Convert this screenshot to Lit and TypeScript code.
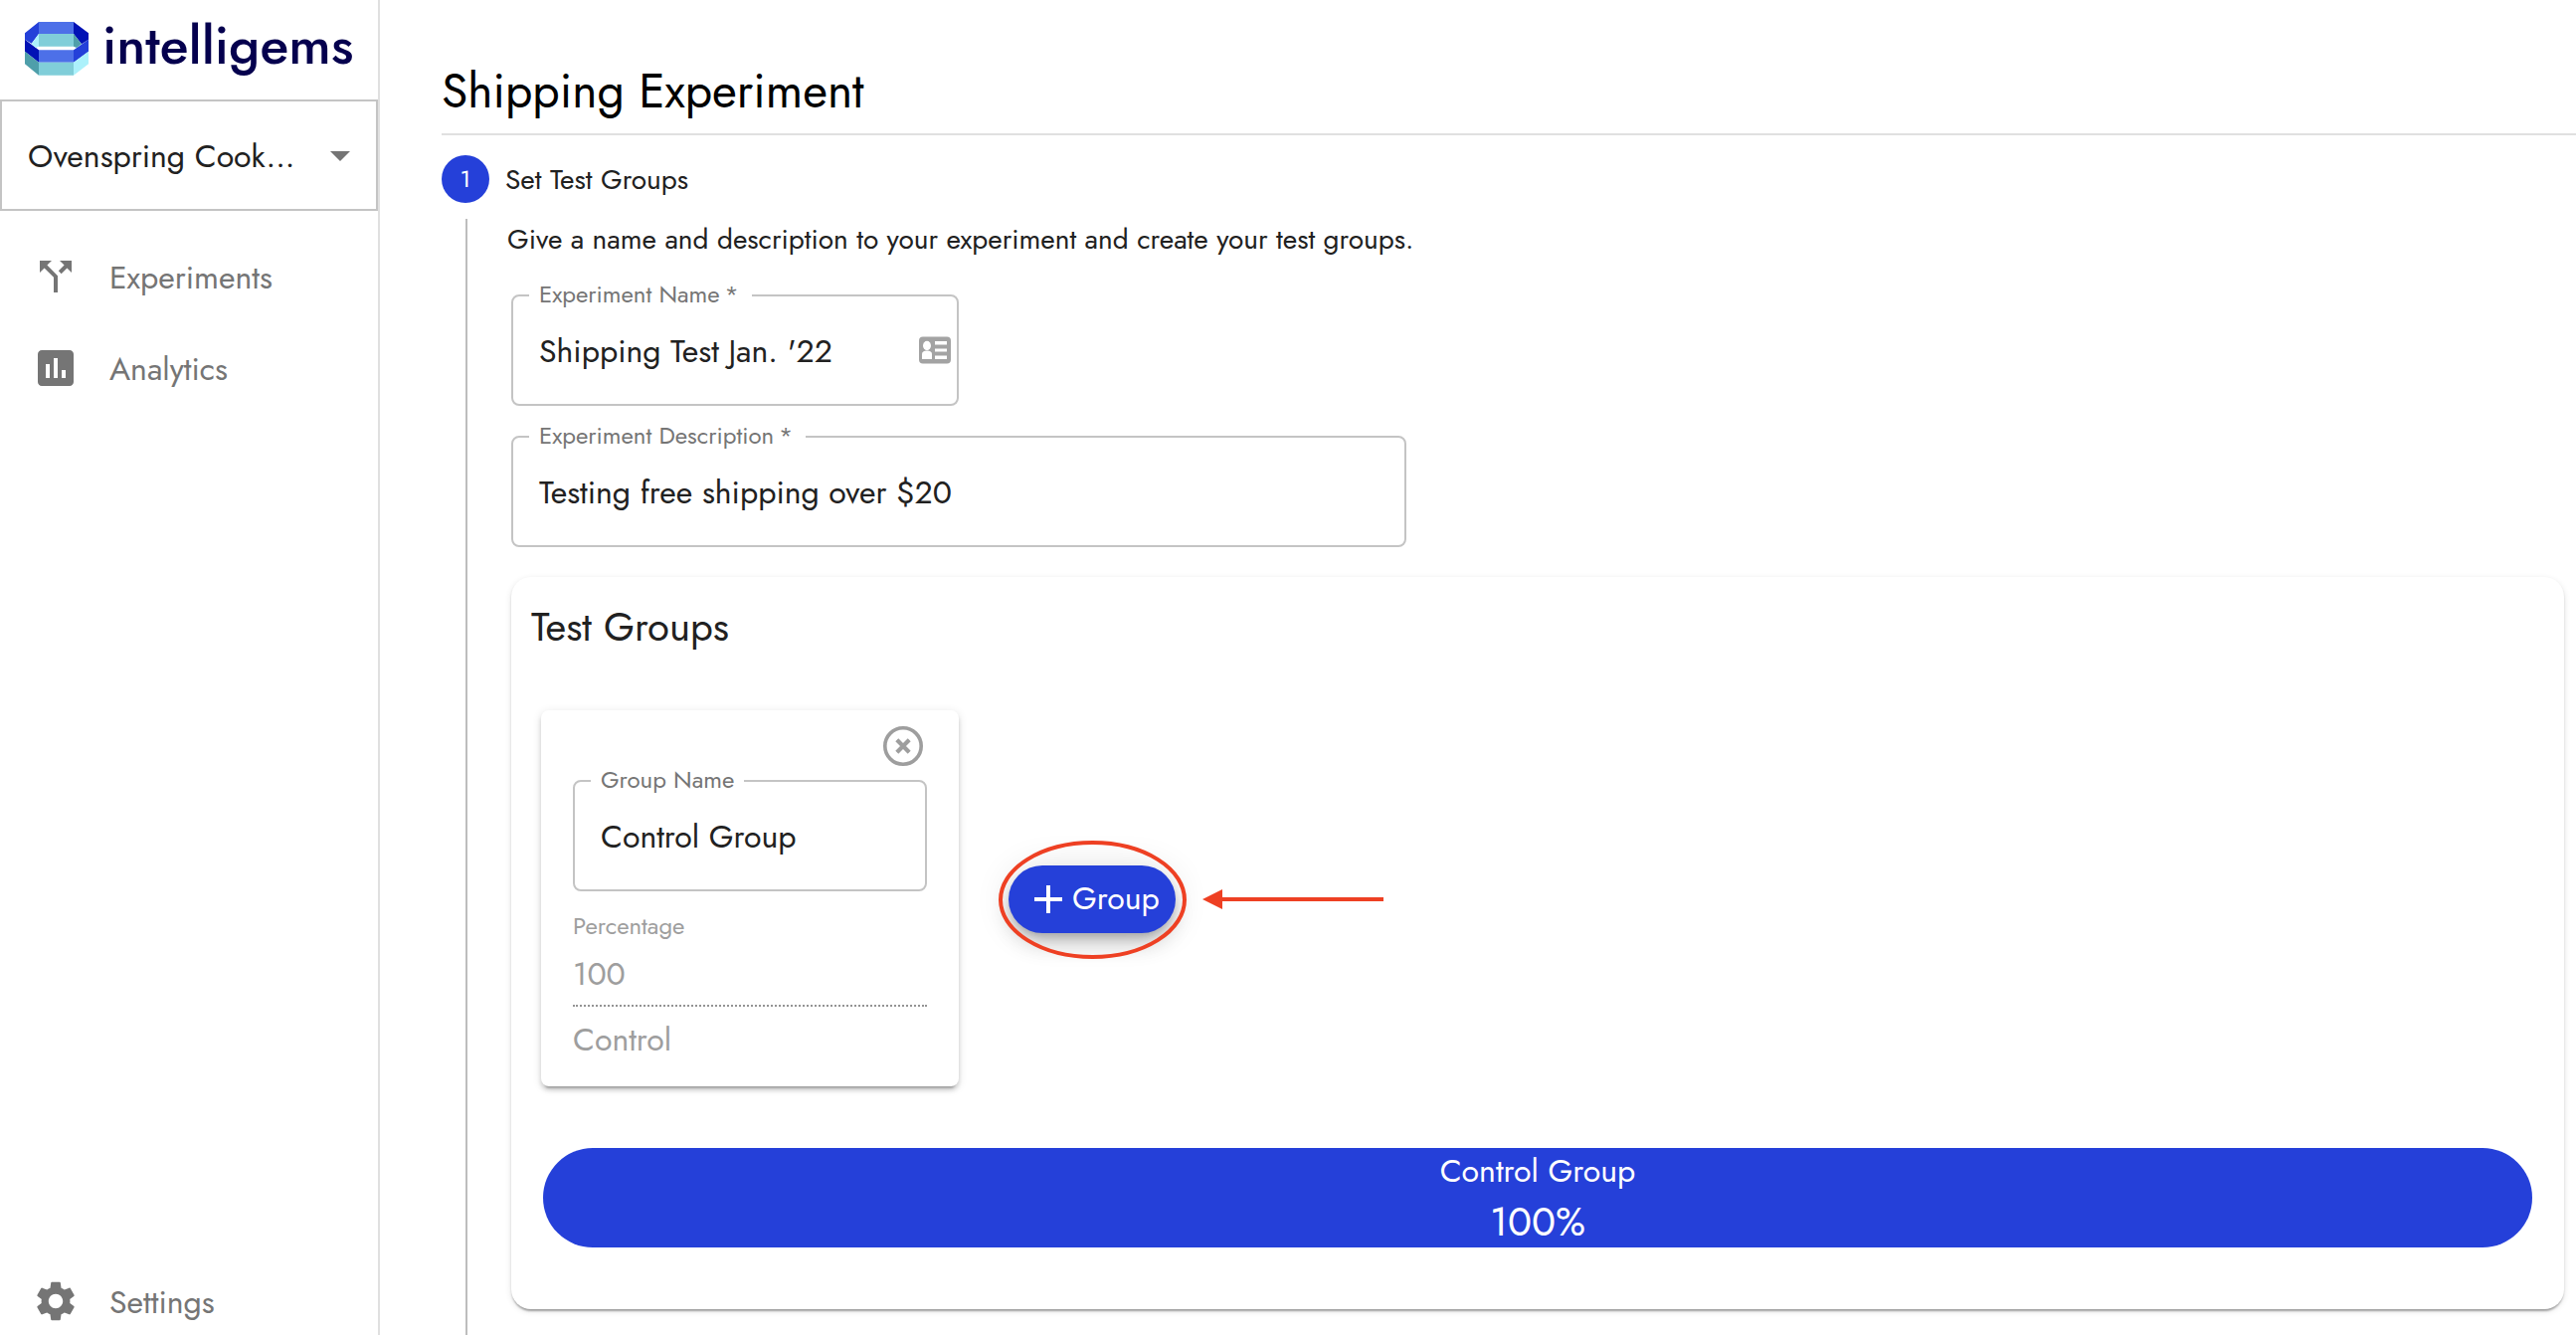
import { LitElement, html, css, svg, nothing } from "lit";
import { customElement, property } from "lit/decorators.js";

const sharedText = css`
  :host {
    font-family: Jost, Lato, "Open Sans", sans-serif;
    color: #212121;
  }
  * {
    box-sizing: border-box;
  }
`;

@customElement("outlined-field")
class OutlinedField extends LitElement {
  @property() label = "";
  @property() value = "";
  @property({ type: Boolean }) required = false;

  static styles = [
    sharedText,
    css`
      :host {
        display: block;
      }
      .frame {
        display: flex;
        align-items: center;
        justify-content: space-between;
        height: 123px;
        margin: -11px 0 0;
        padding: 0 6px 11px 26px;
        border: 2px solid #c4c4c4;
        border-radius: 8px;
        min-width: 0;
      }
      legend {
        height: 24px;
        margin-left: -10px;
        padding: 0 10px;
        font-size: 24px;
        line-height: 21px;
        color: #757575;
        white-space: pre;
      }
      .mark {
        margin: 0 3.3px 0 -2.4px;
      }
      .row {
        display: flex;
        width: 100%;
        height: 86px;
        align-items: center;
        justify-content: space-between;
      }
      .value {
        padding-top: 2px;
        font-size: 32px;
        line-height: 46px;
        white-space: nowrap;
      }
    `,
  ];

  render() {
    return html`
      <fieldset class="frame">
        <legend>${this.label}${this.required ? html` <span class="mark">*</span>` : nothing}</legend>
        <div class="row"><span class="value">${this.value}</span><slot></slot></div>
      </fieldset>
    `;
  }
}

@customElement("app-root")
class AppRoot extends LitElement {
  static styles = [
    sharedText,
    css`
      :host {
        display: block;
      }
      .page {
        display: flex;
        height: 1342px;
        overflow: hidden;
        background: #fff;
      }
      svg {
        display: block;
        flex: none;
      }

      .sidebar {
        display: flex;
        flex-direction: column;
        width: 382px;
        flex: none;
        border-right: 2px solid #e0e0e0;
      }
      .brand {
        display: flex;
        align-items: center;
        height: 100px;
        padding: 0 0 2px 24px;
        gap: 13px;
      }
      .brand-name {
        padding-bottom: 7px;
        font-size: 53.4px;
        font-weight: 500;
        line-height: 60px;
        color: #05004e;
      }
      .store {
        display: flex;
        align-items: center;
        justify-content: space-between;
        height: 112px;
        padding: 2px 26px 0 26px;
        border: 2px solid #c4c4c4;
        font-size: 32px;
        line-height: 46px;
      }
      .nav {
        display: flex;
        flex: 1;
        flex-direction: column;
        padding-top: 20px;
      }
      .nav-item {
        display: flex;
        align-items: center;
        height: 92px;
        padding-left: 32px;
        gap: 30px;
        font-size: 32px;
        line-height: 46px;
        color: #757575;
      }
      .nav-item span {
        padding-top: 2px;
      }
      .nav-item.bottom {
        margin-top: auto;
        margin-bottom: -12px;
      }

      .main {
        display: flex;
        flex: 1;
        flex-direction: column;
        min-width: 0;
        padding-left: 62px;
      }
      .title {
        margin: 0;
        height: 136px;
        padding-top: 57px;
        border-bottom: 2px solid #e0e0e0;
        font-size: 48px;
        font-weight: 400;
        line-height: 70px;
        color: #000;
      }
      .step {
        display: flex;
        align-items: center;
        height: 48px;
        margin-top: 20px;
        gap: 16px;
        font-size: 28px;
        line-height: 40px;
      }
      .step-label {
        padding-top: 2px;
      }
      .step-number {
        width: 48px;
        height: 48px;
        border-radius: 50%;
        background: #2540d9;
        color: #fff;
        font-size: 24px;
        line-height: 48px;
        text-align: center;
      }
      .step-body {
        display: flex;
        flex: 1;
        flex-direction: column;
        align-items: flex-start;
        margin: 16px 0 0 24px;
        padding: 0 12px 0 44px;
        border-left: 2px solid #bdbdbd;
      }
      .intro {
        margin: 0 0 0 -4px;
        padding-top: 1px;
        font-size: 28px;
        line-height: 40px;
      }
      .field-name {
        width: 450px;
        margin-top: 35px;
      }
      .field-description {
        width: 900px;
        margin-top: 30px;
      }

      .groups {
        display: flex;
        flex-direction: column;
        align-self: stretch;
        height: 736px;
        margin-top: 30px;
        padding: 21px 32px 0;
        border-radius: 20px;
        box-shadow: 0 4px 2px -2px rgba(0, 0, 0, 0.2), 0 2px 2px rgba(0, 0, 0, 0.14),
          0 2px 6px rgba(0, 0, 0, 0.12);
      }
      .groups-title {
        margin: 0 0 0 -12px;
        font-size: 40px;
        font-weight: 400;
        line-height: 58px;
      }
      .groups-row {
        display: flex;
        align-items: center;
        margin-top: 55px;
      }
      .group-card {
        display: flex;
        flex-direction: column;
        width: 420px;
        height: 378px;
        margin-left: -2px;
        padding: 12px 32px 0;
        border-radius: 8px;
        box-shadow: 0 6px 2px -4px rgba(0, 0, 0, 0.2), 0 4px 4px rgba(0, 0, 0, 0.14),
          0 2px 10px rgba(0, 0, 0, 0.12);
      }
      .close {
        align-self: flex-end;
      }
      .field-group {
        margin-top: 10px;
      }
      .caption {
        margin-top: 18px;
        font-size: 24px;
        line-height: 34px;
        color: #9e9e9e;
      }
      .percent {
        height: 64px;
        padding-top: 8px;
        border-bottom: 2px dotted #949494;
        font-size: 32px;
        line-height: 46px;
        color: #9e9e9e;
      }
      .kind {
        margin-top: 10px;
        font-size: 32px;
        line-height: 46px;
        color: #9e9e9e;
      }
      .add-wrap {
        position: relative;
        margin: 2px 0 0 50px;
      }
      .add {
        display: flex;
        align-items: center;
        width: 168px;
        height: 68px;
        padding: 0 0 2px 16px;
        border-radius: 34px;
        background: #2540d9;
        color: #fff;
        font-size: 32px;
        line-height: 46px;
        box-shadow: 0 6px 10px -2px rgba(0, 0, 0, 0.2), 0 12px 20px rgba(0, 0, 0, 0.14),
          0 2px 36px rgba(0, 0, 0, 0.12);
      }
      .add svg {
        margin: 2px 0 0;
      }
      .callout {
        position: absolute;
        left: -14px;
        top: -30px;
      }
      .share {
        display: flex;
        flex-direction: column;
        align-items: center;
        height: 100px;
        margin-top: 62px;
        border-radius: 50px;
        background: #2540d9;
        color: #fff;
        font-size: 32px;
        line-height: 46px;
      }
      .share-value {
        font-size: 40px;
        line-height: 56px;
      }
    `,
  ];

  private icon(path: string) {
    return html`<svg width="48" height="48" viewBox="0 0 24 24" fill="currentColor">
      ${svg`<path d=${path}></path>`}
    </svg>`;
  }

  render() {
    return html`
      <div class="page">
        <nav class="sidebar">
          <div class="brand">
            <svg width="66" height="56" viewBox="72 63 198 168">
              <path fill="#4d70e8" d="M117 66H222V102H117zM117 151H222V188H117z" />
              <path fill="#2440d9" d="M117 66V102L95 131L75 119V100zM267 119V155L222 188V151z" />
              <path fill="#0212b5" d="M222 66V102L246 133L267 119V100zM75 119V155L117 188V151z" />
              <path fill="#80ced9" d="M117 102H222V140H117zM117 188H222V227H117z" />
              <path fill="#4f9faa" d="M222 102V140L231 144L246 133zM75 155V193L117 227V188z" />
              <path fill="#acf1fb" d="M117 102V140L108 144L95 133zM267 155V193L222 227V188z" />
            </svg>
            <span class="brand-name">intelligems</span>
          </div>
          <div class="store">
            <span>Ovenspring Cook...</span>
            <svg width="20" height="10" viewBox="0 0 20 10"><path fill="#757575" d="M0 0H20L10 10z" /></svg>
          </div>
          <div class="nav">
            <div class="nav-item">
              ${this.icon("M14 4l2.29 2.29-2.88 2.88 1.42 1.42 2.88-2.88L20 10V4zm-4 0H4v6l2.29-2.29 4.71 4.7V20h2v-8.41l-5.29-5.3z")}
              <span>Experiments</span>
            </div>
            <div class="nav-item">
              ${this.icon("M19 3H5c-1.1 0-2 .9-2 2v14c0 1.1.9 2 2 2h14c1.1 0 2-.9 2-2V5c0-1.1-.9-2-2-2zM9 17H7v-7h2v7zm4 0h-2V7h2v10zm4 0h-2v-4h2v4z")}
              <span>Analytics</span>
            </div>
            <div class="nav-item bottom">
              ${this.icon("M19.14 12.94c.04-.3.06-.61.06-.94 0-.32-.02-.64-.07-.94l2.03-1.58c.18-.14.23-.41.12-.61l-1.92-3.32c-.12-.22-.37-.29-.59-.22l-2.39.96c-.5-.38-1.03-.7-1.62-.94l-.36-2.54c-.04-.24-.24-.41-.48-.41h-3.84c-.24 0-.43.17-.47.41l-.36 2.54c-.59.24-1.13.57-1.62.94l-2.39-.96c-.22-.08-.47 0-.59.22L2.74 8.87c-.12.21-.08.47.12.61l2.03 1.58c-.05.3-.09.63-.09.94s.02.64.07.94l-2.03 1.58c-.18.14-.23.41-.12.61l1.92 3.32c.12.22.37.29.59.22l2.39-.96c.5.38 1.03.7 1.62.94l.36 2.54c.05.24.24.41.48.41h3.84c.24 0 .44-.17.47-.41l.36-2.54c.59-.24 1.13-.56 1.62-.94l2.39.96c.22.08.47 0 .59-.22l1.92-3.32c.12-.22.07-.47-.12-.61l-2.01-1.58zM12 15.6c-1.98 0-3.6-1.62-3.6-3.6s1.62-3.6 3.6-3.6 3.6 1.62 3.6 3.6-1.62 3.6-3.6 3.6z")}
              <span>Settings</span>
            </div>
          </div>
        </nav>

        <main class="main">
          <h1 class="title">Shipping Experiment</h1>
          <div class="step">
            <span class="step-number">1</span>
            <span class="step-label">Set Test Groups</span>
          </div>
          <div class="step-body">
            <p class="intro">
              Give a name and description to your experiment and create your test groups.
            </p>
            <outlined-field class="field-name" required label="Experiment Name" value="Shipping Test Jan. '22">
              <svg width="32" height="28" viewBox="0 0 32 28">
                <rect width="32" height="27" y=".5" rx="4" fill="#a3a3a3" />
                <g fill="#fff">
                  <ellipse cx="8" cy="9.5" rx="4" ry="4.7" />
                  <path d="M3 23V18Q3 14.5 8 14.5T13 18V23z" />
                  <path d="M16 5H28V8.500H16zM16 12.500H28V15.500H16zM16 19.500H28V23H16z" />
                </g>
              </svg>
            </outlined-field>
            <outlined-field
              class="field-description"
              required
              label="Experiment Description"
              value="Testing free shipping over $20"
            ></outlined-field>

            <section class="groups">
              <h2 class="groups-title">Test Groups</h2>
              <div class="groups-row">
                <div class="group-card">
                  <svg class="close" width="48" height="48" viewBox="0 0 48 48" fill="none" stroke="#9e9e9e">
                    <circle cx="24" cy="24" r="18.200" stroke-width="3.600" />
                    <path d="M17.800 17.800L30.200 30.200M30.200 17.800L17.800 30.200" stroke-width="4.200" />
                  </svg>
                  <outlined-field class="field-group" label="Group Name" value="Control Group"></outlined-field>
                  <div class="caption">Percentage</div>
                  <div class="percent">100</div>
                  <div class="kind">Control</div>
                </div>
                <div class="add-wrap">
                  <div class="add">
                    ${this.icon("M19 13h-6v6h-2v-6H5v-2h6V5h2v6h6v2z")}
                    <span>Group</span>
                  </div>
                  <svg class="callout" width="400" height="128" viewBox="0 0 400 128">
                    <ellipse cx="98.500" cy="64.500" rx="92.500" ry="57.500" fill="none" stroke="#ee4023" stroke-width="4" />
                    <path d="M209 64L229 54V62H391V66H229V74z" fill="#ee4023" />
                  </svg>
                </div>
              </div>
              <div class="share">
                <span>Control Group</span>
                <span class="share-value">100%</span>
              </div>
            </section>
          </div>
        </main>
      </div>
    `;
  }
}
